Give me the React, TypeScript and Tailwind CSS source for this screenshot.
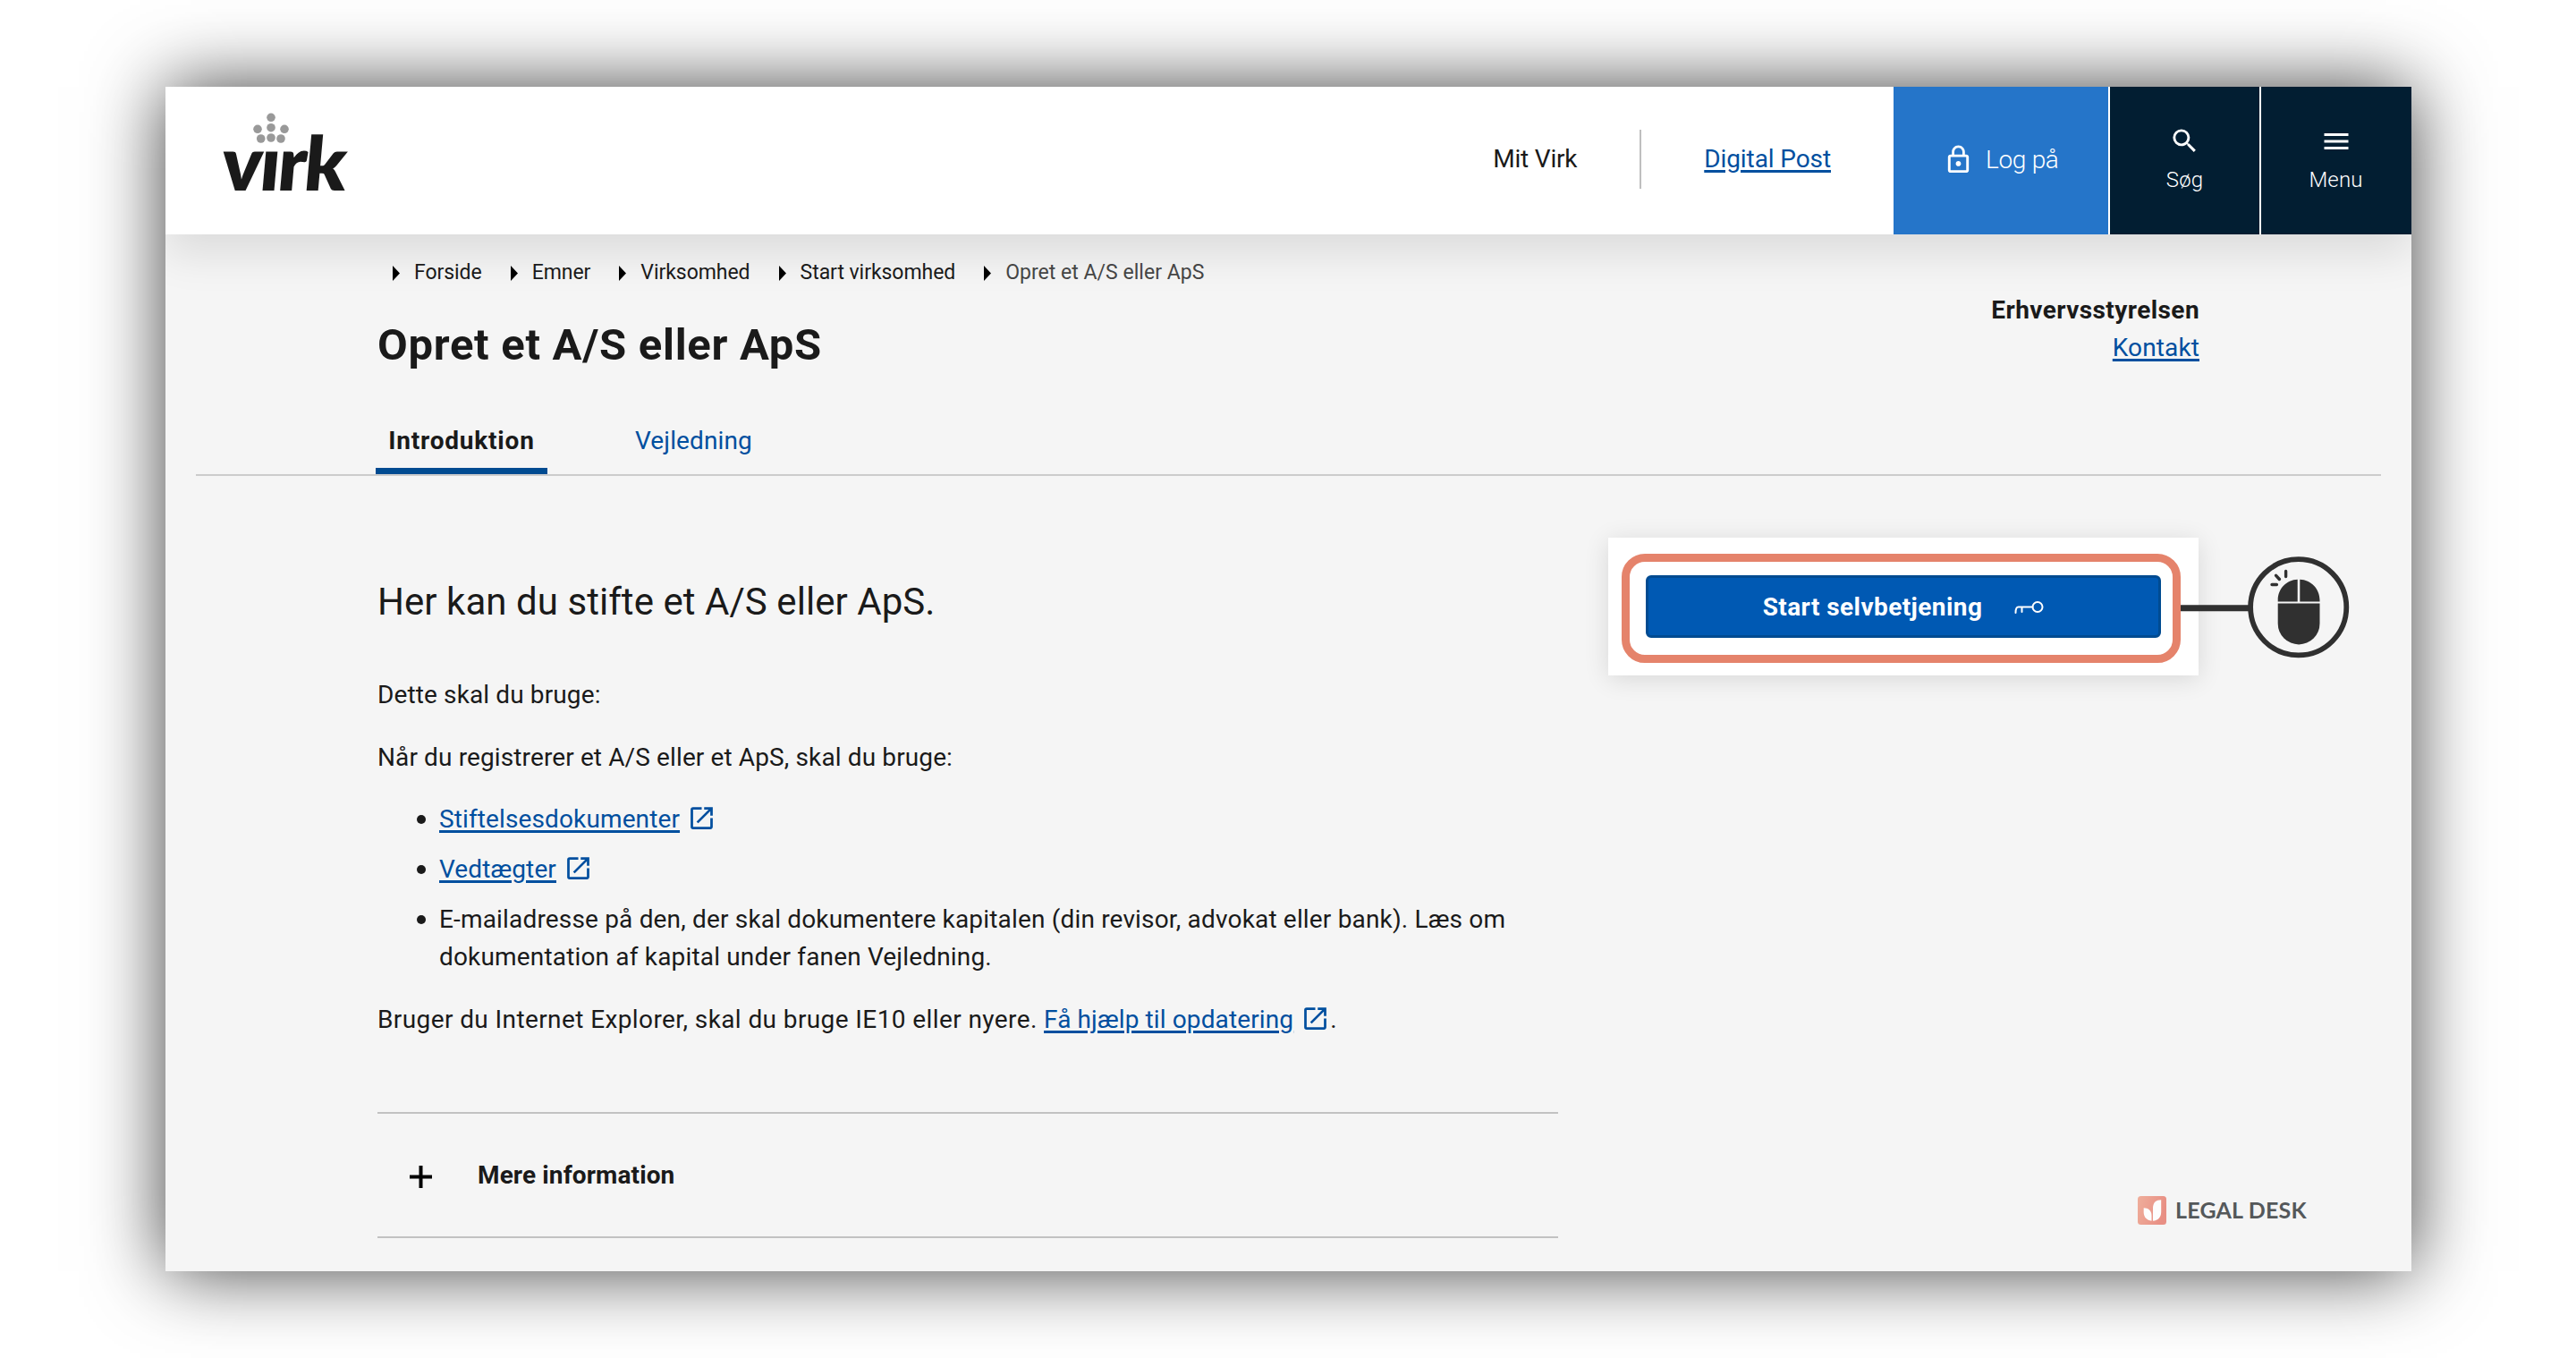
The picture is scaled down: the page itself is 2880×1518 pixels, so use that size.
import type { ReactNode } from 'react';
import { MdLockOutline, MdMenu, MdOpenInNew, MdSearch } from 'react-icons/md';

const CRUMBS = ['Forside', 'Emner', 'Virksomhed', 'Start virksomhed', 'Opret et A/S eller ApS'];

const CROWN_DOTS = [
  [20, 5.3],
  [5, 18.3],
  [20, 16.7],
  [35, 18.3],
  [8.7, 29],
  [20, 28],
  [31, 29],
];

function Logo() {
  return (
    <div className="relative ml-[60px] mt-[41px] h-[85px]">
      <svg className="absolute left-[38px] top-[-12px]" width="40" height="36" fill="#999999">
        {CROWN_DOTS.map(([cx, cy]) => (
          <circle key={`${cx}-${cy}`} cx={cx} cy={cy} r="4.8" />
        ))}
      </svg>
      <span className="block origin-bottom-left -skew-x-[5deg] font-['Lato',sans-serif] text-[84px] font-extrabold leading-[86px] tracking-[-2.5px] text-[#1a1a1a]">
        vırk
      </span>
    </div>
  );
}

function Link({ children, external = false }: { children: ReactNode; external?: boolean }) {
  return (
    <a href="#" className="text-[#004f9f]">
      <span className="underline decoration-[2.5px] underline-offset-[3px]">{children}</span>
      {external && <MdOpenInNew className="ml-2 inline-block h-[33px] w-[33px] align-[-6px]" />}
    </a>
  );
}

function Header() {
  return (
    <header className="relative z-10 flex h-[165px] bg-white shadow-[0_22px_44px_rgba(0,0,0,0.1)]">
      <Logo />
      <nav className="ml-auto flex items-center pb-[3px]">
        <a href="#" className="pr-[70px] tracking-[-0.2px]">Mit Virk</a>
        <div className="h-[66px] w-[2px] bg-[#bfbfbf]" />
        <div className="px-[70px] tracking-[-0.1px]">
          <Link>Digital Post</Link>
        </div>
      </nav>
      <button className="flex w-[240px] items-center bg-[#2575c9] pb-[2px] pl-[55px] text-white">
        <MdLockOutline className="h-[35px] w-[35px]" />
        <span className="ml-[13px] font-light tracking-[-0.3px]">Log på</span>
      </button>
      <button className="ml-[2px] flex w-[167px] flex-col items-center bg-[#021e32] pt-[43px] text-[24px] font-light leading-[32px] text-white">
        <MdSearch className="h-[35px] w-[35px]" />
        <span className="mt-[10px]">Søg</span>
      </button>
      <button className="ml-[2px] flex w-[168px] flex-col items-center bg-[#021e32] pr-[1px] pt-[43px] text-[24px] font-light leading-[32px] text-white">
        <MdMenu className="h-[36px] w-[36px]" />
        <span className="mt-[9px]">Menu</span>
      </button>
    </header>
  );
}

function Breadcrumbs() {
  return (
    <ol className="ml-[17px] flex gap-[32px] text-[23px] leading-[30px] tracking-[-0.05px]">
      {CRUMBS.map((crumb, i) => (
        <li key={crumb} className="flex items-center gap-[16px]">
          <svg width="8" height="17" viewBox="0 0 8 17">
            <path d="M0 0l8 8.5L0 17z" fill="#000" />
          </svg>
          <span className={i === CRUMBS.length - 1 ? 'tracking-[0.02px] text-[#454545]' : ''}>{crumb}</span>
        </li>
      ))}
    </ol>
  );
}

function ClickHint() {
  return (
    <svg className="absolute left-[640px] top-[9px]" width="190" height="140" fill="#303030" stroke="#303030">
      <path d="M0 69.7h76" strokeWidth="7" />
      <circle cx="131.7" cy="68.8" r="53.6" fill="none" strokeWidth="5.8" />
      <g stroke="none">
        <path d="M130.7 37.8v24.6h-22v-1.6c0-12.5 9.5-22.5 22-23z" />
        <path d="M133.3 37.8v24.6h22.2v-1.6c0-12.5-9.7-22.5-22.2-23z" />
        <path d="M108.7 64.4h46.8V87a23.4 23.4 0 0 1-46.8 0z" />
      </g>
      <path d="M117.6 28.5v6M106.6 33.3l3.8 4.2M102 43.5h5.4" fill="none" strokeWidth="3.4" strokeLinecap="round" />
    </svg>
  );
}

function StartPanel() {
  return (
    <aside className="relative ml-[56px] mt-[69px] h-[154px] w-[660px] bg-white p-[42px] shadow-[0_4px_26px_rgba(0,0,0,0.12)]">
      <button className="flex h-[70px] w-full items-center justify-center gap-[36px] rounded-[6px] border-[3px] border-[#004b91] bg-[#0059b3] pt-[1px] font-bold tracking-[0.42px] text-white">
        Start selvbetjening
        <svg width="33" height="16" fill="none" stroke="#fff" strokeWidth="2" strokeLinecap="round">
          <circle cx="26" cy="7.5" r="5.5" />
          <path d="M20.5 7.5H4.5C2.5 7.5 1.5 9 1.5 14M8.5 7.5V13" />
        </svg>
      </button>
      <div className="absolute left-[15px] top-[18px] h-[122px] w-[625px] rounded-[26px] border-[9px] border-[#e5836b]" />
      <ClickHint />
    </aside>
  );
}

function Bullet({ children }: { children: ReactNode }) {
  return (
    <li className="flex">
      <span className="ml-[44px] mr-[15px] mt-[16px] h-[10px] w-[10px] shrink-0 rounded-full bg-[#1a1a1a]" />
      <span>{children}</span>
    </li>
  );
}

function Introduction() {
  return (
    <main className="w-[1320px]">
      <p className="mt-[114px] text-[42px] leading-[54px] tracking-[0.05px]">Her kan du stifte et A/S eller ApS.</p>
      <p className="mt-[56px]">Dette skal du bruge:</p>
      <p className="mt-7">Når du registrerer et A/S eller et ApS, skal du bruge:</p>
      <ul className="mt-[27px] flex flex-col gap-[14px]">
        <Bullet>
          <Link external>Stiftelsesdokumenter</Link>
        </Bullet>
        <Bullet>
          <Link external>Vedtægter</Link>
        </Bullet>
        <Bullet>
          <span className="tracking-[0.17px]">
            E-mailadresse på den, der skal dokumentere kapitalen (din revisor, advokat eller bank). Læs om
            dokumentation af kapital under fanen Vejledning.
          </span>
        </Bullet>
      </ul>
      <p className="mt-7">
        <span className="tracking-[0.4px]">Bruger du Internet Explorer, skal du bruge IE10 eller nyere. </span>
        <Link external>Få hjælp til opdatering</Link>.
      </p>
      <div className="mt-[82px] flex h-[141px] items-center border-y-2 border-[#c2c2c2]">
        <svg className="ml-[36px] mt-[4px]" width="25" height="25" stroke="#000" strokeWidth="4">
          <path d="M12.5 0v25M0 12.5h25" />
        </svg>
        <span className="ml-[51px] pt-[1px] font-bold">Mere information</span>
      </div>
    </main>
  );
}

function LegalDesk() {
  return (
    <div className="absolute left-[2205px] top-[1240px] flex h-8 items-center gap-[10px]">
      <svg width="32" height="32" viewBox="0 0 32 32">
        <defs>
          <linearGradient id="legal-desk" x1="0" y1="0" x2="1" y2="0.3">
            <stop offset="0" stopColor="#efae9b" />
            <stop offset="1" stopColor="#e88f84" />
          </linearGradient>
        </defs>
        <rect width="32" height="32" rx="3.5" fill="url(#legal-desk)" />
        <path d="M6.7 13.3c5.3 0 8.8 3.2 8.8 8.4v6c-5.3-.5-8.8-4.2-8.8-9.4z" fill="#fdfdfd" />
        <path d="M26.2 4.2v13.5c0 5.8-3.4 9.6-9.2 10V13.2c0-5.8 3.4-9 9.2-9z" fill="#fdfdfd" />
      </svg>
      <span className="pb-[2px] font-['Lato',sans-serif] text-[25px] font-bold leading-8 tracking-[0.2px] text-[#54585a]">LEGAL DESK</span>
    </div>
  );
}

export default function App() {
  return (
    <div className="h-[1518px] w-[2880px] overflow-hidden bg-white pl-[185px] pt-[97px] font-['Roboto',sans-serif] text-[28px] leading-[42px] tracking-[0.12px] text-[#1a1a1a]">
      <div className="relative h-[1324px] w-[2511px] shadow-[0_0_80px_rgba(0,0,0,0.75)]">
        <div className="h-full overflow-hidden bg-[#f5f5f5]">
          <Header />
          {/* Above the header shadow */}
          <div className="relative z-20">
            <div className="flex h-[209px] justify-between px-[237px]">
              <div className="pt-[28px]">
                <Breadcrumbs />
                <h1 className="mt-[36px] text-[49px] font-bold leading-[60px] tracking-[0.7px]">
                  Opret et A/S eller ApS
                </h1>
              </div>
              <div className="pt-[64px] text-right">
                <p className="font-bold tracking-[0.42px]">Erhvervsstyrelsen</p>
                <Link>Kontakt</Link>
              </div>
            </div>
            <div className="mx-[34px] flex border-b-2 border-[#cccccc] pl-[201px]">
              <a href="#" className="h-[59px] w-[192px] border-b-[7px] border-[#004b91] pt-[1px] text-center font-bold tracking-[0.8px]">
                Introduktion
              </a>
              <a href="#" className="ml-[98px] pt-[1px] text-[#004f9f]">Vejledning</a>
            </div>
            <div className="flex items-start pl-[237px]">
              <Introduction />
              <StartPanel />
            </div>
          </div>
        </div>
        <LegalDesk />
      </div>
    </div>
  );
}
